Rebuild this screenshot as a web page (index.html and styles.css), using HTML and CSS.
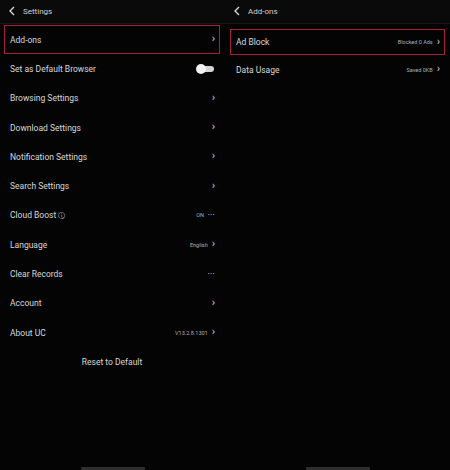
FILE: index.html
```html
<!DOCTYPE html>
<html lang="en">
<head>
  <meta charset="UTF-8">
  <title>Settings - Add-ons</title>
  <link rel="stylesheet" href="styles.css">
</head>
<body>
  <div class="screens">
    <div class="screen">
      <div class="topbar">
        <svg class="back" width="6" height="10" viewBox="0 0 6 10"><polyline points="5,1 1,5 5,9" fill="none" stroke="#e0e0e0" stroke-width="1.3"/></svg>
        <span class="title">Settings</span>
      </div>
      <div class="list">
        <div class="row marked"><span class="label">Add-ons</span><span class="chev">&#8250;</span></div>
        <div class="row"><span class="label">Set as Default Browser</span><span class="toggle"><span class="knob"></span></span></div>
        <div class="row"><span class="label">Browsing Settings</span><span class="chev">&#8250;</span></div>
        <div class="row"><span class="label">Download Settings</span><span class="chev">&#8250;</span></div>
        <div class="row"><span class="label">Notification Settings</span><span class="chev">&#8250;</span></div>
        <div class="row"><span class="label">Search Settings</span><span class="chev">&#8250;</span></div>
        <div class="row"><span class="label">Cloud Boost <span class="info">&#9432;</span></span><span class="value">ON</span><span class="dots">&bull;&bull;&bull;</span></div>
        <div class="row"><span class="label">Language</span><span class="value">English</span><span class="chev">&#8250;</span></div>
        <div class="row"><span class="label">Clear Records</span><span class="dots">&bull;&bull;&bull;</span></div>
        <div class="row"><span class="label">Account</span><span class="chev">&#8250;</span></div>
        <div class="row"><span class="label">About UC</span><span class="value">V13.2.8.1301</span><span class="chev">&#8250;</span></div>
        <div class="reset">Reset to Default</div>
      </div>
      <div class="home-bar"></div>
    </div>

    <div class="screen">
      <div class="topbar">
        <svg class="back" width="6" height="10" viewBox="0 0 6 10"><polyline points="5,1 1,5 5,9" fill="none" stroke="#e0e0e0" stroke-width="1.3"/></svg>
        <span class="title">Add-ons</span>
      </div>
      <div class="list right">
        <div class="row marked"><span class="label">Ad Block</span><span class="value">Blocked 0 Ads</span><span class="chev">&#8250;</span></div>
        <div class="row"><span class="label">Data Usage</span><span class="value">Saved 0KB</span><span class="chev">&#8250;</span></div>
      </div>
      <div class="home-bar"></div>
    </div>
  </div>
</body>
</html>
```

FILE: styles.css
```css
body {
  margin: 0;
  background-color: #050505;
  font-family: Roboto, "Liberation Sans", sans-serif;
  color: #d8d8d8;
}

.screens {
  display: flex;
  height: 470px;
}

.screen {
  width: 225px;
  display: flex;
  flex-direction: column;
  background-color: #040404;
}

.topbar {
  height: 23px;
  display: flex;
  align-items: center;
  padding: 0 12px 0 9px;
  gap: 8px;
  background-color: #0a0a0a;
  border-bottom: 1px solid #151515;
}

.back {
  display: block;
  margin-top: -1px;
}

.title {
  font-size: 8px;
  color: #cfcfcf;
}

.list {
  flex: 1;
  padding: 1px 5px 0 4px;
}

.list.right {
  padding: 5px 5px 0 5px;
}

.row {
  height: 29.3px;
  display: flex;
  align-items: center;
  gap: 4px;
  padding: 0 4px 0 5px;
  border: 1px solid transparent;
  box-sizing: border-box;
}

.row.marked {
  border-color: #a3213a;
}

.list.right .row.marked {
  height: 26px;
}

.label {
  flex: 1;
  font-size: 8.5px;
  color: #d8d8d8;
}

.info {
  font-size: 7px;
}

.value {
  font-size: 5.5px;
  color: #b0b0b0;
}

.chev {
  font-size: 11px;
  line-height: 1;
  color: #cfcfcf;
  margin-top: -2px;
}

.dots {
  font-size: 4.5px;
  letter-spacing: 0.8px;
  color: #cfcfcf;
}

.toggle {
  width: 17px;
  height: 6px;
  border-radius: 3px;
  background-color: #d4d4d4;
  position: relative;
  margin-right: 1px;
}

.knob {
  position: absolute;
  left: -1px;
  top: -2px;
  width: 10px;
  height: 10px;
  border-radius: 50%;
  background-color: #f2f2f2;
}

.reset {
  height: 29px;
  display: flex;
  align-items: center;
  justify-content: center;
  font-size: 8.5px;
  color: #d6d6d6;
}

.home-bar {
  width: 64px;
  height: 3px;
  background-color: #2e2e2e;
  margin: 0 auto;
  border-radius: 1px;
}
```
